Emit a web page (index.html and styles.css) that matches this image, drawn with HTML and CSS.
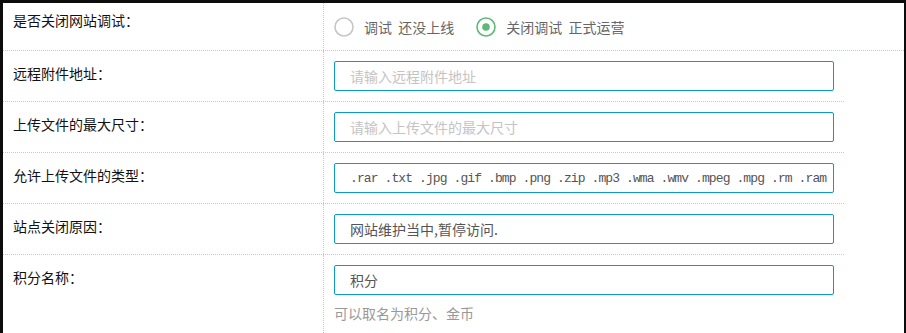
FILE: index.html
```html
<!DOCTYPE html>
<html>
<head>
    <meta charset="utf-8">
    <title>网站设置</title>
    <link rel="stylesheet" href="styles.css">
</head>
<body>
    <div class="panel">
        <div class="row row-first">
            <div class="label">是否关闭网站调试：</div>
            <div class="field radios">
                <label class="radio">
                    <svg width="20" height="20" viewBox="0 0 20 20"><circle cx="10" cy="10" r="9" fill="none" stroke="#c6c6c6" stroke-width="1.6"/></svg>
                    <span>调试&nbsp; 还没上线</span>
                </label>
                <label class="radio checked">
                    <svg width="20" height="20" viewBox="0 0 20 20"><circle cx="10" cy="10" r="9" fill="none" stroke="#5fb878" stroke-width="1.6"/><circle cx="10" cy="10" r="3.8" fill="#5fb878"/></svg>
                    <span>关闭调试&nbsp; 正式运营</span>
                </label>
            </div>
        </div>
        <div class="row">
            <div class="label">远程附件地址：</div>
            <div class="field">
                <input type="text" class="text-input" placeholder="请输入远程附件地址">
            </div>
        </div>
        <div class="row">
            <div class="label">上传文件的最大尺寸：</div>
            <div class="field">
                <input type="text" class="text-input" placeholder="请输入上传文件的最大尺寸">
            </div>
        </div>
        <div class="row">
            <div class="label">允许上传文件的类型：</div>
            <div class="field">
                <input type="text" class="text-input mono" value=".rar .txt .jpg .gif .bmp .png .zip .mp3 .wma .wmv .mpeg .mpg .rm .ram .doc .xls">
            </div>
        </div>
        <div class="row">
            <div class="label">站点关闭原因：</div>
            <div class="field">
                <input type="text" class="text-input" value="网站维护当中,暂停访问.">
            </div>
        </div>
        <div class="row row-last">
            <div class="label">积分名称：</div>
            <div class="field">
                <input type="text" class="text-input" value="积分">
                <div class="hint">可以取名为积分、金币</div>
            </div>
        </div>
    </div>
</body>
</html>
```

FILE: styles.css
```css
body {
    margin: 0;
    background: #0c0c0c;
    font-family: "Noto Sans CJK SC", "Liberation Sans", sans-serif;
    font-size: 14px;
    overflow: hidden;
}
.panel {
    margin: 3px 2px 0 3px;
    background: #fff;
    min-height: 400px;
}
.row {
    display: grid;
    grid-template-columns: 320px 1fr;
    width: 841px;
    border-bottom: 1px dotted #c8c8c8;
}
.row-first {
    width: 100%;
    height: 47px;
}
.row-last {
    border-bottom: none;
    min-height: 120px;
}
.label {
    padding: 12px 10px 0;
    line-height: 20px;
    color: #111;
}
.row-first .label {
    padding-top: 7px;
}
.field {
    border-left: 1px dotted #c8c8c8;
    padding: 10px 10px;
}
.radios {
    display: flex;
    align-items: center;
    padding-top: 0;
    padding-bottom: 0;
}
.radio {
    display: flex;
    align-items: center;
    gap: 10px;
    margin-right: 22px;
    color: #666;
    line-height: 20px;
}
.radio svg {
    display: block;
}
.text-input {
    display: block;
    box-sizing: border-box;
    width: 500px;
    height: 30px;
    margin: 0;
    padding: 0 5px 0 15px;
    border: 1px solid #0a9bc7;
    border-radius: 2px;
    font-family: "Noto Sans CJK SC", "Liberation Sans", sans-serif;
    font-size: 14px;
    color: #555;
    background: #fff;
    outline: none;
}
.text-input::placeholder {
    color: #c4c4c4;
}
.mono {
    font-family: "Liberation Mono", monospace;
    font-size: 13px;
    letter-spacing: -0.9px;
    color: #555;
}
.hint {
    margin-top: 8px;
    line-height: 20px;
    color: #999;
}
```
